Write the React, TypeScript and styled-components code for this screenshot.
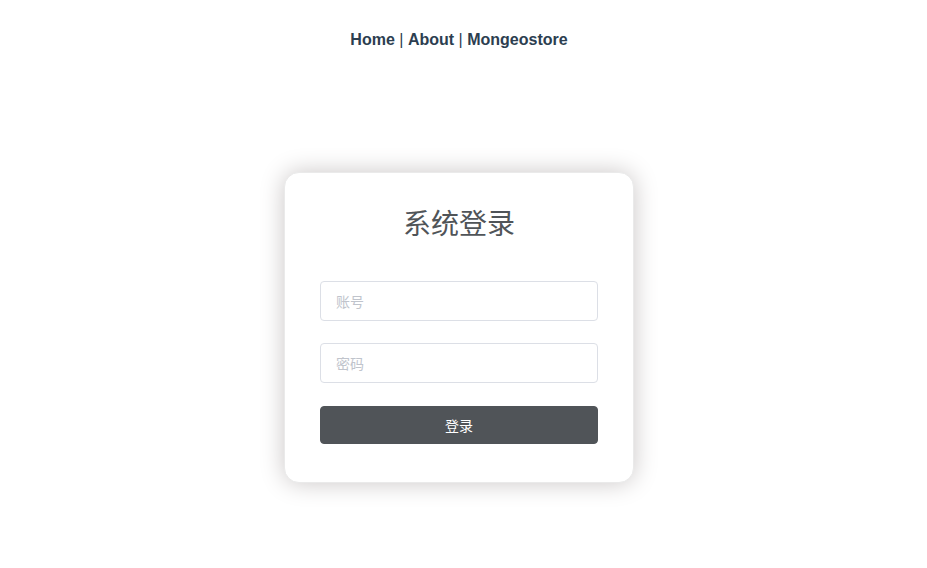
import React from "react";
import styled, { createGlobalStyle } from "styled-components";

const GlobalStyle = createGlobalStyle`
  html, body, #root {
    margin: 0;
    padding: 0;
    background: #fff;
    min-height: 100%;
  }
  html, body {
    height: 100%;
  }
  body {
    padding-right: 9px;
    box-sizing: border-box;
    font-family: "Liberation Sans", Arial, "Noto Sans CJK SC", sans-serif;
    -webkit-font-smoothing: antialiased;
  }
`;

export default function App() {
  return (
    <>
      <GlobalStyle />
      <Nav>
        <NavLink href="#">Home</NavLink>
        <Sep>|</Sep>
        <NavLink href="#">About</NavLink>
        <Sep>|</Sep>
        <NavLink href="#">Mongeostore</NavLink>
      </Nav>
      <LoginCard>
        <Title>系统登录</Title>
        <FormItem>
          <Input type="text" placeholder="账号" />
        </FormItem>
        <FormItem>
          <Input type="password" placeholder="密码" />
        </FormItem>
        <FormItem $top={1}>
          <SubmitButton type="button">登录</SubmitButton>
        </FormItem>
      </LoginCard>
    </>
  );
}

const Nav = styled.div`
  padding: 31px 30px 30px;
  text-align: center;
  font-size: 16px;
  font-weight: bold;
  color: #2c3e50;
`;

const NavLink = styled.a`
  color: #2c3e50;
  font-weight: bold;
  text-decoration: none;
`;

const Sep = styled.span`
  margin: 0 0.28em;
  font-weight: normal;
  color: #2c3e50;
`;

const LoginCard = styled.div`
  display: flex;
  flex-direction: column;
  width: 278px;
  margin: 93px auto 60px;
  padding: 35px 35px 16px;
  background: #fff;
  border: 1px solid #eaeaea;
  border-radius: 15px;
  box-shadow: 0 0 25px #cac6c6;
`;

const Title = styled.h3`
  margin: 0 0 45px;
  text-align: center;
  font-family: "Noto Sans CJK SC", sans-serif;
  font-size: 28px;
  font-weight: normal;
  line-height: 28px;
  color: #505458;
`;

const FormItem = styled.div<{ $top?: number }>`
  margin-top: ${(p) => p.$top ?? 0}px;
  margin-bottom: 22px;
  display: flex;
`;

const Input = styled.input`
  box-sizing: border-box;
  width: 100%;
  height: 40px;
  padding: 0 15px;
  border: 1px solid #dcdfe6;
  border-radius: 4px;
  font-family: "Noto Sans CJK SC", sans-serif;
  font-size: 14px;
  color: #606266;
  outline: none;

  &::placeholder {
    color: #c0c4cc;
  }
`;

const SubmitButton = styled.button`
  width: 100%;
  height: 38px;
  border: 1px solid #505458;
  border-radius: 4px;
  background: #505458;
  color: #fff;
  font-family: "Noto Sans CJK SC", sans-serif;
  font-size: 14px;
  cursor: pointer;
`;
